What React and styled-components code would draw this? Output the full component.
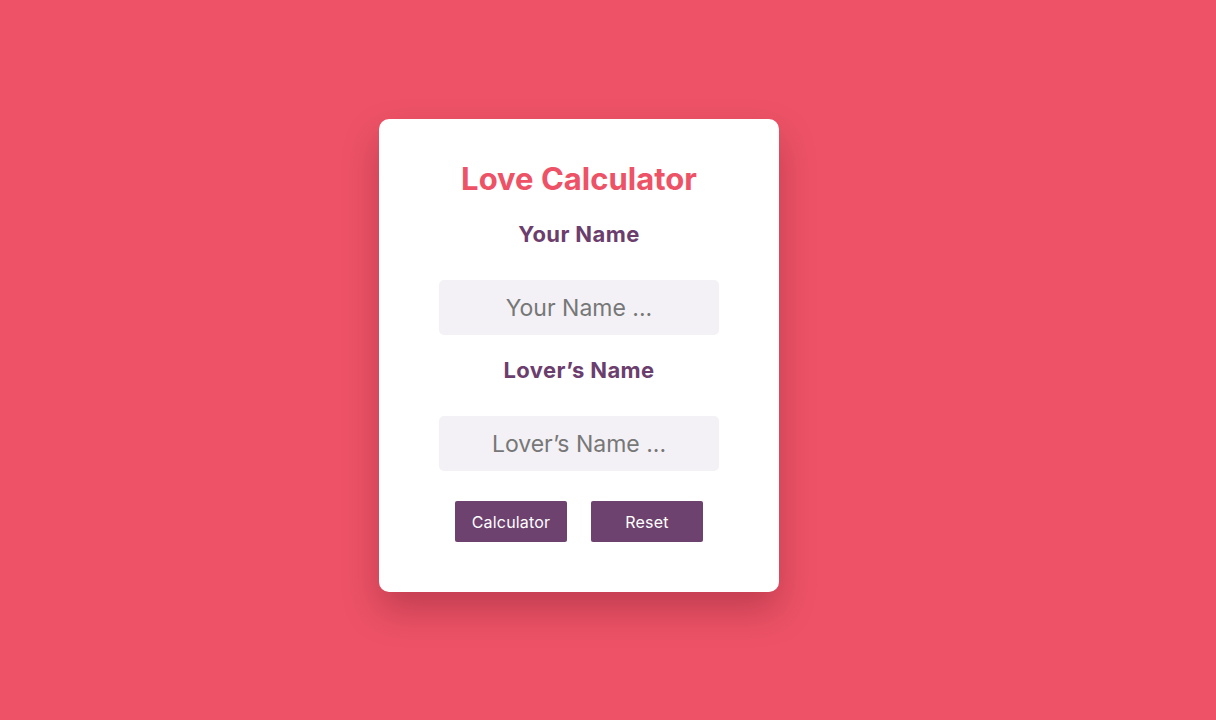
import React from "react";
import styled, { createGlobalStyle } from "styled-components";

const GlobalStyle = createGlobalStyle`
  * {
    box-sizing: border-box;
  }
  body {
    margin: 0;
    background-color: #ee5266;
    font-family: Inter, "Liberation Sans", sans-serif;
  }
`;

const Page = styled.div`
  min-height: 100vh;
  display: flex;
  align-items: center;
  justify-content: center;
  padding: 0 58px 9px 0;
`;

const Card = styled.div`
  width: 400px;
  background-color: #ffffff;
  border-radius: 10px;
  box-shadow: 0 18px 36px rgba(60, 0, 20, 0.25);
  padding: 41px 0 50px;
  display: flex;
  flex-direction: column;
  align-items: center;
`;

const Title = styled.h1`
  margin: 0 0 22px;
  font-size: 31px;
  line-height: 38px;
  font-weight: 700;
  color: #ee5266;
  letter-spacing: 0;
`;

const Label = styled.h3`
  margin: 0 0 31px;
  font-size: 22px;
  line-height: 29px;
  font-weight: 700;
  color: #6b3e6e;
  letter-spacing: 0.4px;
`;

const Input = styled.input`
  width: 280px;
  height: 55px;
  margin-bottom: ${(p) => p.$gap}px;
  border: none;
  border-radius: 5px;
  background-color: #f3f1f5;
  text-align: center;
  font-family: inherit;
  font-size: 23px;
  color: #333;
  outline: none;

  &::placeholder {
    color: #777777;
  }
`;

const Buttons = styled.div`
  display: flex;
  gap: 24px;
`;

const Button = styled.button`
  width: 112px;
  height: 41px;
  border: none;
  border-radius: 2px;
  background-color: #6d426f;
  color: #ffffff;
  font-family: inherit;
  font-size: 16px;
  letter-spacing: 0.2px;
  cursor: pointer;
`;

const App = () => {
  return (
    <Page>
      <GlobalStyle />
      <Card>
        <Title>Love Calculator</Title>
        <Label>Your Name</Label>
        <Input placeholder="Your Name ..." $gap={21} />
        <Label>Lover’s Name</Label>
        <Input placeholder="Lover’s Name ..." $gap={30} />
        <Buttons>
          <Button>Calculator</Button>
          <Button>Reset</Button>
        </Buttons>
      </Card>
    </Page>
  );
};

export default App;
